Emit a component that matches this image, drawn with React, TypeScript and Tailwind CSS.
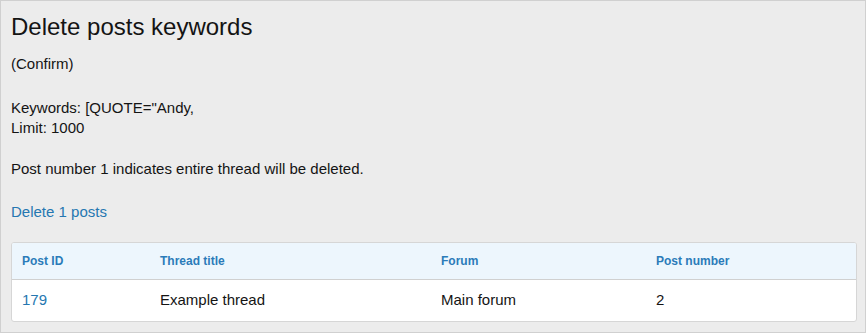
import React from "react";

export default function App() {
  return (
    <div
      className="w-[866px] h-[333px] bg-[#ececec] border border-[#d0d0d0] text-[#141414] overflow-hidden"
      style={{ fontFamily: '"Liberation Sans", Arial, sans-serif' }}
    >
      <div className="px-[10px] pt-[11px]">
        <h1 className="text-[24px] leading-[30px] text-[#141414]">Delete posts keywords</h1>
        <p className="mt-[12px] text-[15px] leading-[20px]">(Confirm)</p>
        <p className="mt-[24px] text-[15px] leading-[20px]">
          Keywords: [QUOTE="Andy,
          <br />
          Limit: 1000
        </p>
        <p className="mt-[21px] text-[15px] leading-[20px]">
          Post number 1 indicates entire thread will be deleted.
        </p>
        <p className="mt-[23px] text-[15px] leading-[20px]">
          <a className="text-[#2577b1] cursor-pointer">Delete 1 posts</a>
        </p>
        <div className="mt-[20px] w-[846px] bg-white border border-[#d6d6d6] rounded-[3px] overflow-hidden">
          <div className="grid grid-cols-[138px_281px_215px_1fr] bg-[#edf6fd] border-b border-[#d0d0d0] h-[37px] items-center text-[12px] font-bold text-[#2b7bb9]">
            <div className="pl-[10px]">Post ID</div>
            <div className="pl-[10px]">Thread title</div>
            <div className="pl-[10px]">Forum</div>
            <div className="pl-[10px]">Post number</div>
          </div>
          <div className="grid grid-cols-[138px_281px_215px_1fr] h-[41px] items-center text-[15px]">
            <div className="pl-[10px] text-[#2577b1]">179</div>
            <div className="pl-[10px]">Example thread</div>
            <div className="pl-[10px]">Main forum</div>
            <div className="pl-[10px]">2</div>
          </div>
        </div>
      </div>
    </div>
  );
}
